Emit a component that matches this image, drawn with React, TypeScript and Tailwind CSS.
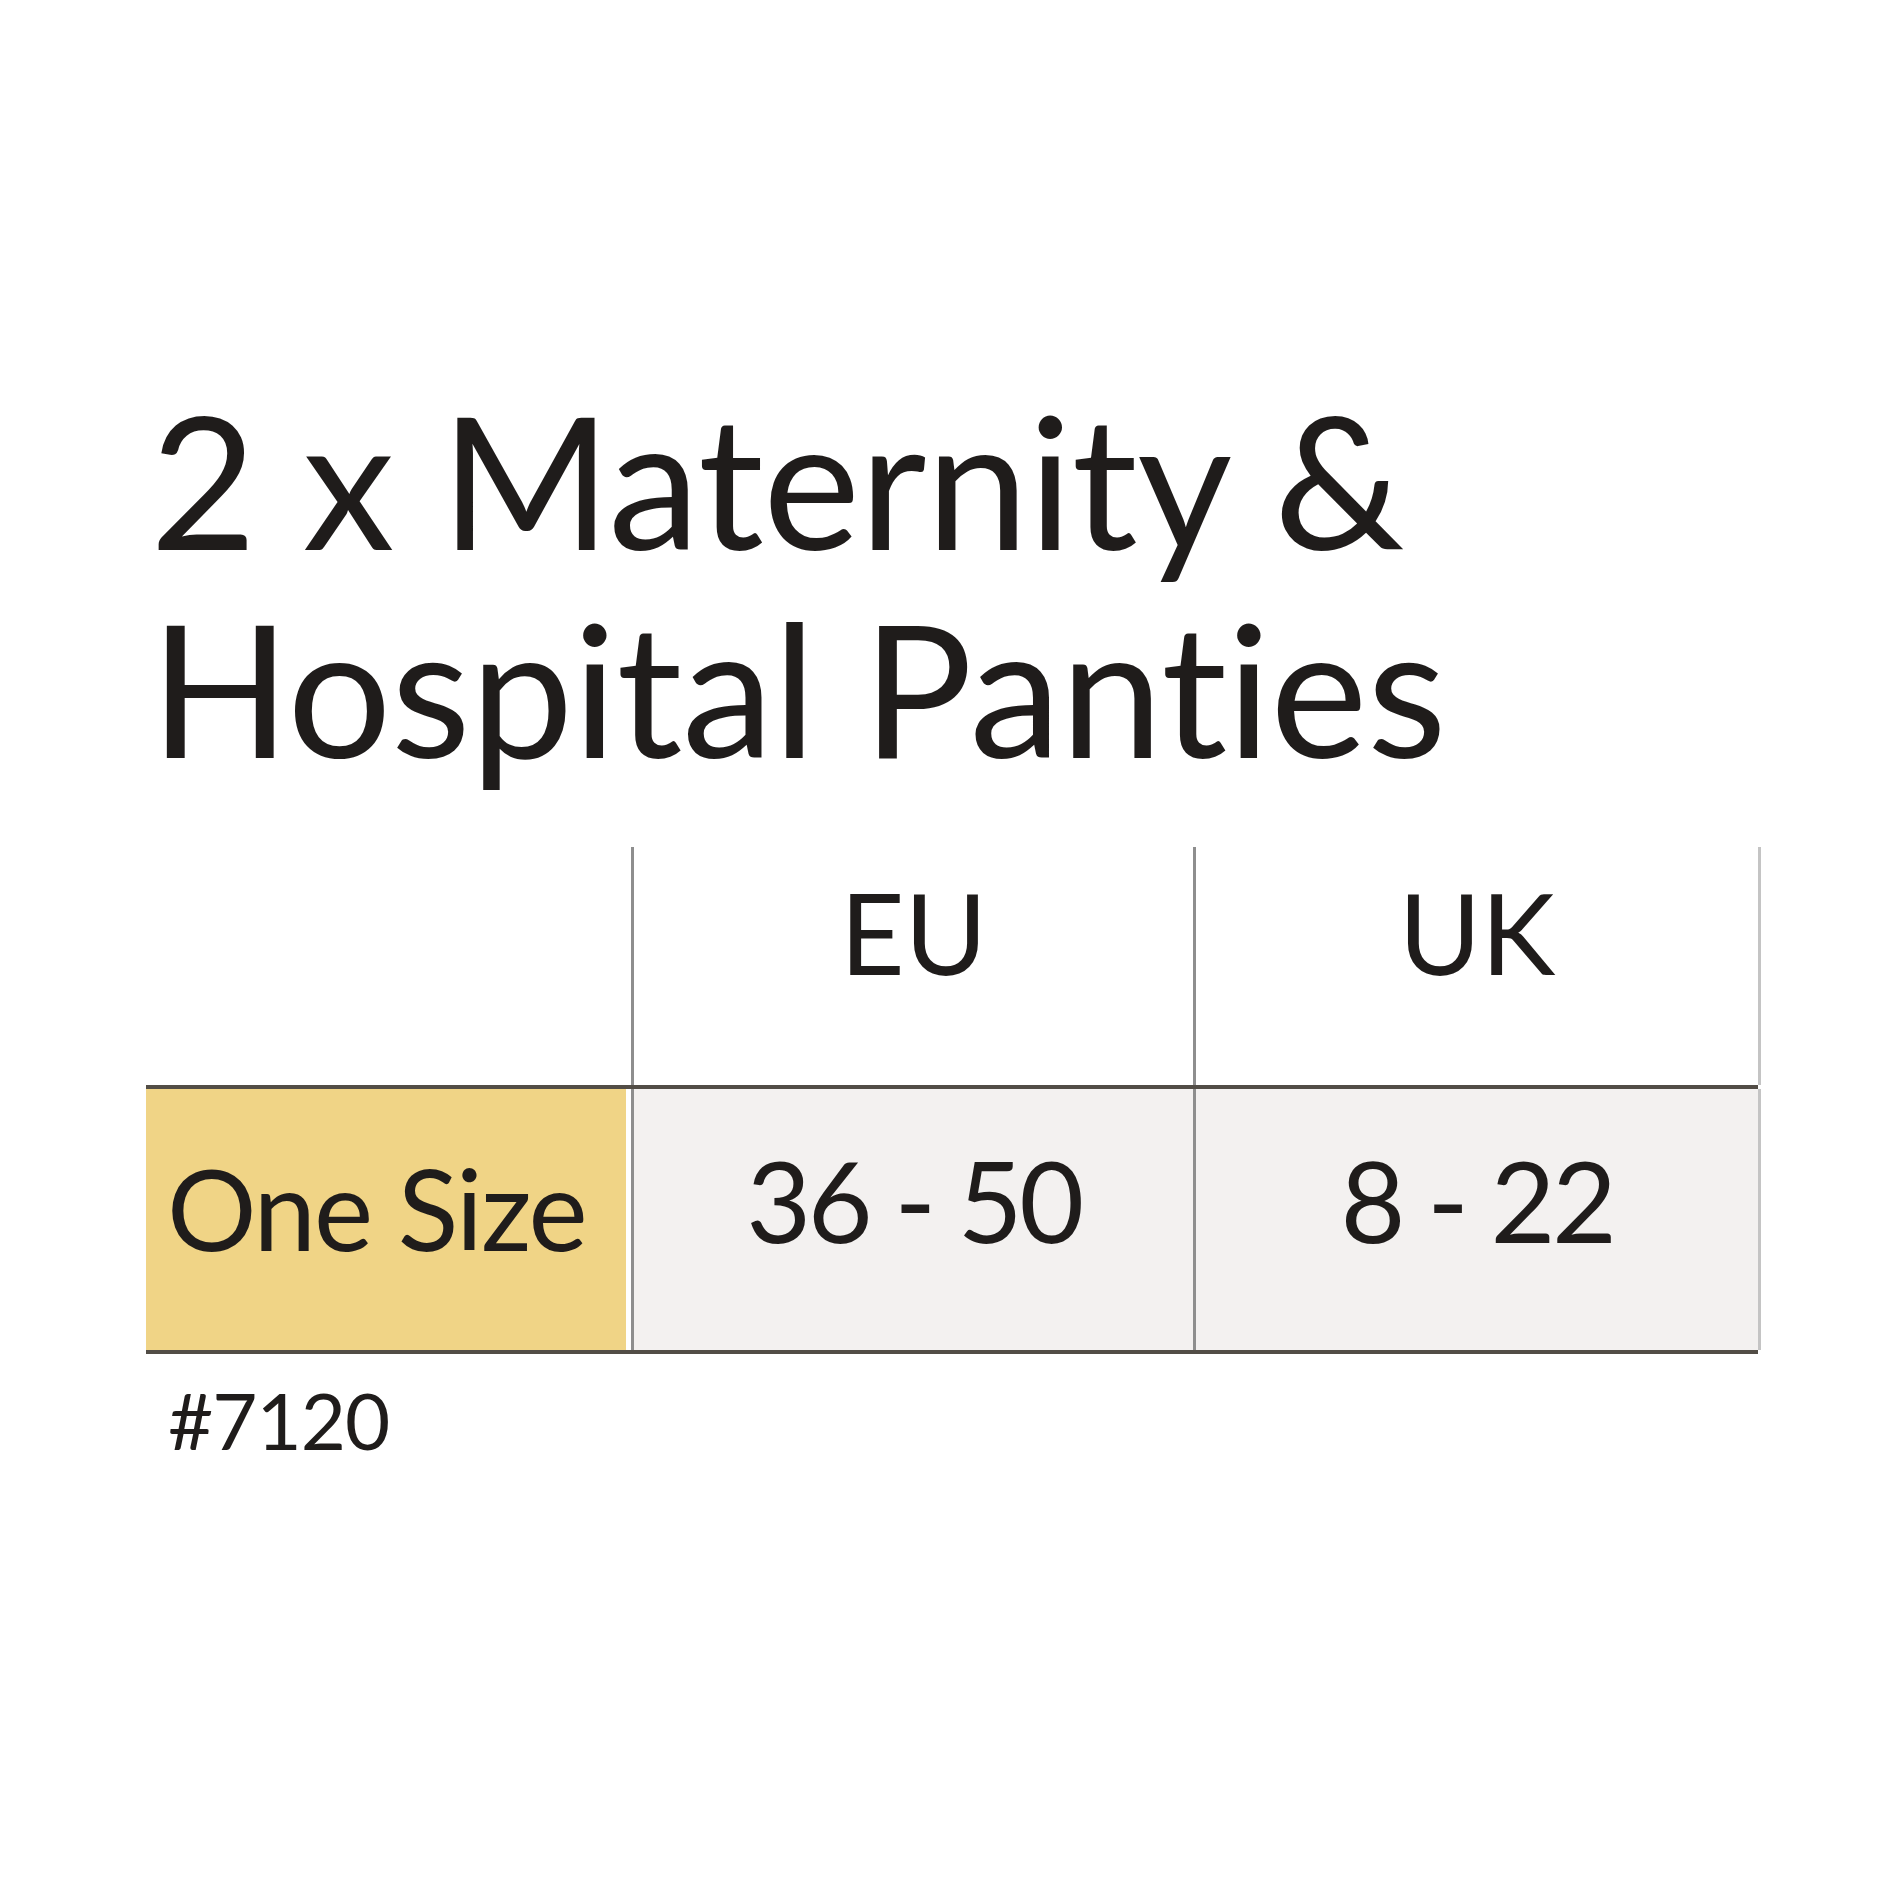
export default function App() {
  return (
    <main className="w-[1880px] h-[1880px] bg-white text-[#1f1c1b] font-['Lato',sans-serif]">
      <div className="pt-[375px] pl-[150px]">
        <h1 className="text-[184px] leading-[208px] font-normal tracking-[-0.5px]">
          2 x Maternity &amp;
          <br />
          Hospital Panties
        </h1>
      </div>

      {/* size table */}
      <div className="mt-[56px] ml-[146px] w-[1615px]">
        <div className="grid grid-cols-[485px_562px_568px] h-[238px]">
          <div />
          <div className="border-l-[3px] border-[#8e8e8e] flex justify-center pt-[29px]">
            <span className="text-[112px] leading-[112px]">EU</span>
          </div>
          <div className="border-l-[3px] border-r-[3px] border-l-[#8e8e8e] border-r-[#c4c4c4] flex justify-center pt-[29px]">
            <span className="text-[112px] leading-[112px]">UK</span>
          </div>
        </div>
        <div className="h-[4px] bg-[#524d46] mr-[3px]" />
        <div className="grid grid-cols-[485px_562px_568px] h-[261px]">
          <div className="bg-[#f0d486] mr-[5px] pl-[21px] pt-[63px]">
            <span className="text-[112px] leading-[112px] tracking-[-2px]">One Size</span>
          </div>
          <div className="bg-[#f3f1f0] border-l-[3px] border-[#8e8e8e] flex justify-center pt-[55px]">
            <span className="text-[112px] leading-[112px] tracking-[-3.5px]">36 - 50</span>
          </div>
          <div className="bg-[#f3f1f0] border-l-[3px] border-r-[3px] border-l-[#8e8e8e] border-r-[#c4c4c4] flex justify-center pt-[55px]">
            <span className="text-[112px] leading-[112px] tracking-[-3.5px]">8 - 22</span>
          </div>
        </div>
        <div className="h-[4px] bg-[#524d46] mr-[3px]" />
      </div>

      <p className="mt-[27px] ml-[168px] text-[78px] leading-[78px] tracking-[-1px]">#7120</p>
    </main>
  );
}
